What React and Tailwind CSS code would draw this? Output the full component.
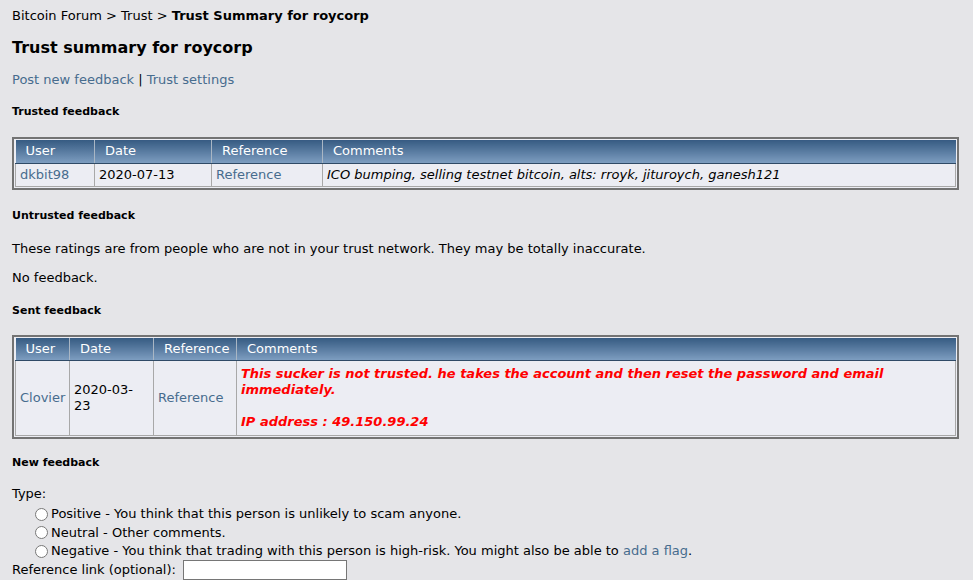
export default function App() {
  const font = { fontFamily: '"DejaVu Sans", Verdana, sans-serif' };
  const th =
    "h-[23px] px-[10px] text-left font-normal text-white text-[13px] leading-4 border-r border-[#a9b6c4] border-b border-b-[#2f4a66] bg-gradient-to-b from-[#365b82] to-[#7d9dc0]";
  const td = "border border-[#a8a8a8] px-1 py-[3px] align-middle text-[13px] leading-4";
  return (
    <div className="min-h-[580px] w-[973px] bg-[#e5e5e8] pl-3 pr-[14px] text-black text-[13px] leading-4" style={font}>
      <div className="pt-[8px] leading-4">
        Bitcoin Forum &gt; Trust &gt; <b>Trust Summary for roycorp</b>
      </div>
      <div className="mt-[14px] text-[16px] font-bold leading-5">Trust summary for roycorp</div>
      <div className="mt-[14px] leading-4">
        <a className="text-[#476c8e]">Post new feedback</a> | <a className="text-[#476c8e]">Trust settings</a>
      </div>
      <div className="mt-[17px] text-[11px] font-bold leading-[14px]">Trusted feedback</div>

      <div className="mt-[18px] border-2 border-[#737373] bg-[#ecedf3] p-px">
        <table className="w-full table-fixed border-collapse">
          <thead>
            <tr>
              <th className={th + " w-[79px]"}>User</th>
              <th className={th + " w-[117px]"}>Date</th>
              <th className={th + " w-[111px]"}>Reference</th>
              <th className={th + " border-r-0"}>Comments</th>
            </tr>
          </thead>
          <tbody>
            <tr className="bg-[#ecedf3]">
              <td className={td + " text-[#476c8e]"}>dkbit98</td>
              <td className={td}>2020-07-13</td>
              <td className={td + " text-[#476c8e]"}>Reference</td>
              <td className={td + " italic"}>ICO bumping, selling testnet bitcoin, alts: rroyk, jituroych, ganesh121</td>
            </tr>
          </tbody>
        </table>
      </div>

      <div className="mt-[19px] text-[11px] font-bold leading-[14px]">Untrusted feedback</div>
      <div className="mt-[18px] leading-4">
        These ratings are from people who are not in your trust network. They may be totally inaccurate.
      </div>
      <div className="mt-[13px] leading-4">No feedback.</div>
      <div className="mt-[18px] text-[11px] font-bold leading-[14px]">Sent feedback</div>

      <div className="mt-[17px] border-2 border-[#737373] bg-[#ecedf3] p-px">
        <table className="w-full table-fixed border-collapse">
          <thead>
            <tr>
              <th className={th + " w-[54px]"}>User</th>
              <th className={th + " w-[84px]"}>Date</th>
              <th className={th + " w-[83px]"}>Reference</th>
              <th className={th + " border-r-0"}>Comments</th>
            </tr>
          </thead>
          <tbody>
            <tr className="bg-[#ecedf3]">
              <td className={td + " text-[#476c8e]"}>Clovier</td>
              <td className={td}>2020-03-23</td>
              <td className={td + " text-[#476c8e]"}>Reference</td>
              <td className={td + " py-[5px] font-bold italic text-[#ff0000]"}>
                This sucker is not trusted. he takes the account and then reset the password and email immediately.
                <br />
                <br />
                IP address : 49.150.99.24
              </td>
            </tr>
          </tbody>
        </table>
      </div>

      <div className="mt-[17px] text-[11px] font-bold leading-[14px]">New feedback</div>
      <div className="mt-4 leading-4">Type:</div>
      <div className="mt-[3px] pl-[18px]">
        <label className="flex h-[18px] items-center">
          <input type="radio" name="t" className="ml-[5px] mr-[3px] h-[13px] w-[13px]" />
          Positive - You think that this person is unlikely to scam anyone.
        </label>
        <label className="flex h-[19px] items-center">
          <input type="radio" name="t" className="ml-[5px] mr-[3px] h-[13px] w-[13px]" />
          Neutral - Other comments.
        </label>
        <label className="flex h-[18px] items-center">
          <input type="radio" name="t" className="ml-[5px] mr-[3px] h-[13px] w-[13px]" />
          <span>
            Negative - You think that trading with this person is high-risk. You might also be able to{" "}
            <a className="text-[#476c8e]">add a flag</a>.
          </span>
        </label>
      </div>
      <div className="flex h-5 items-center">
        <span>Reference link (optional):</span>
        <input type="text" className="ml-[7px] h-5 w-[164px] border border-[#767676] bg-white" />
      </div>
    </div>
  );
}
